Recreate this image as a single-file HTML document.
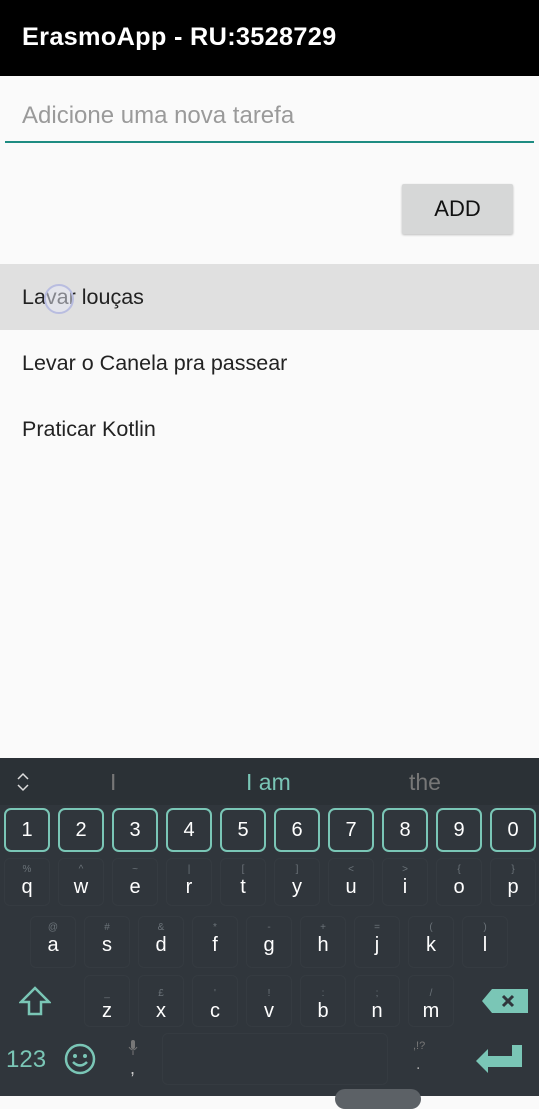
<!DOCTYPE html>
<html><head><style>
body{margin:0;width:539px;height:1096px;position:relative;overflow:hidden;background:#fafafa;font-family:"Liberation Sans",sans-serif}
.a{position:absolute}
.k{position:absolute;width:46px;border:1.5px solid #353b41;border-radius:6px;box-sizing:border-box;color:#fff;text-align:center}
.k b{display:block;font-weight:normal;font-size:10px;color:#6b7379;margin-top:5px;height:12px;line-height:12px}
.k span{display:block;font-size:20px;line-height:22px}
.n{position:absolute;top:808px;width:46px;height:44px;border:2px solid #7ac6b6;border-radius:7px;box-sizing:border-box;color:#fff;font-size:20px;line-height:40px;text-align:center}
.li{position:absolute;left:22px;font-size:21.5px;color:#222}
</style></head><body>
<div class="a" style="left:0;top:0;width:539px;height:76px;background:#000"></div>
<div class="a" style="left:22px;top:23px;color:#fff;font-size:25.3px;font-weight:bold;letter-spacing:0.3px">ErasmoApp - RU:3528729</div>
<div class="a" style="left:22px;top:102px;color:#9a9a9a;font-size:24px">Adicione uma nova tarefa</div>
<div class="a" style="left:5px;top:141px;width:529px;height:2px;background:#1e8c82"></div>
<div class="a" style="left:402px;top:184px;width:111px;height:50px;background:#d6d7d7;border-radius:2px;box-shadow:0 1px 2px rgba(0,0,0,.25);font-size:22px;line-height:50px;text-align:center;color:#111">ADD</div>
<div class="a" style="left:0;top:264px;width:539px;height:66px;background:#e0e0e0"></div>
<div class="li" style="top:285px">Lavar louças</div>
<div class="a" style="left:44px;top:284px;width:26px;height:26px;border:2px solid #b9bde0;border-radius:50%;background:rgba(230,232,245,.5)"></div>
<div class="li" style="top:351px">Levar o Canela pra passear</div>
<div class="li" style="top:417px">Praticar Kotlin</div>

<div class="a" style="left:0;top:758px;width:539px;height:338px;background:#30363c"></div>
<div class="a" style="left:0;top:758px;width:539px;height:47px;background:#2b3136"></div>
<svg class="a" style="left:16px;top:772px" width="14" height="20"><path d="M2 7 L7 2 L12 7 M2 13 L7 18 L12 13" stroke="#ddd" stroke-width="1.5" fill="none"/></svg>
<div class="a" style="left:110px;top:769px;font-size:23px;color:#777">I</div>
<div class="a" style="left:246px;top:769px;font-size:23px;color:#7ac6b6">I am</div>
<div class="a" style="left:409px;top:769px;font-size:23px;color:#777">the</div>

<div class="n" style="left:4px">1</div><div class="n" style="left:58px">2</div><div class="n" style="left:112px">3</div><div class="n" style="left:166px">4</div><div class="n" style="left:220px">5</div><div class="n" style="left:274px">6</div><div class="n" style="left:328px">7</div><div class="n" style="left:382px">8</div><div class="n" style="left:436px">9</div><div class="n" style="left:490px">0</div>

<div style="position:absolute;top:858px;left:0;width:539px">
<div class="k" style="left:4px;height:48px"><b>%</b><span>q</span></div>
<div class="k" style="left:58px;height:48px"><b>^</b><span>w</span></div>
<div class="k" style="left:112px;height:48px"><b>~</b><span>e</span></div>
<div class="k" style="left:166px;height:48px"><b>|</b><span>r</span></div>
<div class="k" style="left:220px;height:48px"><b>[</b><span>t</span></div>
<div class="k" style="left:274px;height:48px"><b>]</b><span>y</span></div>
<div class="k" style="left:328px;height:48px"><b>&lt;</b><span>u</span></div>
<div class="k" style="left:382px;height:48px"><b>&gt;</b><span>i</span></div>
<div class="k" style="left:436px;height:48px"><b>{</b><span>o</span></div>
<div class="k" style="left:490px;height:48px"><b>}</b><span>p</span></div>
</div>
<div style="position:absolute;top:916px;left:0;width:539px">
<div class="k" style="left:30px;height:52px"><b>@</b><span>a</span></div>
<div class="k" style="left:84px;height:52px"><b>#</b><span>s</span></div>
<div class="k" style="left:138px;height:52px"><b>&amp;</b><span>d</span></div>
<div class="k" style="left:192px;height:52px"><b>*</b><span>f</span></div>
<div class="k" style="left:246px;height:52px"><b>-</b><span>g</span></div>
<div class="k" style="left:300px;height:52px"><b>+</b><span>h</span></div>
<div class="k" style="left:354px;height:52px"><b>=</b><span>j</span></div>
<div class="k" style="left:408px;height:52px"><b>(</b><span>k</span></div>
<div class="k" style="left:462px;height:52px"><b>)</b><span>l</span></div>
</div>
<div style="position:absolute;top:975px;left:0;width:539px">
<div class="k" style="left:84px;height:52px"><b style="margin-top:12px">_</b><span>z</span></div>
<div class="k" style="left:138px;height:52px"><b style="margin-top:12px">£</b><span>x</span></div>
<div class="k" style="left:192px;height:52px"><b style="margin-top:12px">'</b><span>c</span></div>
<div class="k" style="left:246px;height:52px"><b style="margin-top:12px">!</b><span>v</span></div>
<div class="k" style="left:300px;height:52px"><b style="margin-top:12px">:</b><span>b</span></div>
<div class="k" style="left:354px;height:52px"><b style="margin-top:12px">;</b><span>n</span></div>
<div class="k" style="left:408px;height:52px"><b style="margin-top:12px">/</b><span>m</span></div>
</div>
<svg class="a" style="left:19px;top:986px" width="32" height="30"><path d="M16 2 L30 16 L22 16 L22 28 L10 28 L10 16 L2 16 Z" stroke="#7ac6b6" stroke-width="2.5" fill="none"/></svg>
<svg class="a" style="left:482px;top:989px" width="46" height="24"><path d="M10 0 L46 0 L46 24 L10 24 L0 12 Z" fill="#7ac6b6"/><path d="M21 7 L31 17 M31 7 L21 17" stroke="#30363c" stroke-width="3"/></svg>
<div class="a" style="left:6px;top:1046px;font-size:24px;color:#7ac6b6">123</div>
<svg class="a" style="left:64px;top:1043px" width="32" height="32"><circle cx="16" cy="16" r="14" stroke="#7ac6b6" stroke-width="2.5" fill="none"/><circle cx="11" cy="13" r="2" fill="#7ac6b6"/><circle cx="21" cy="13" r="2" fill="#7ac6b6"/><path d="M9 19 Q16 26 23 19" stroke="#7ac6b6" stroke-width="2.5" fill="none"/></svg>
<svg class="a" style="left:128px;top:1040px" width="10" height="16"><rect x="3" y="0" width="4" height="9" rx="2" fill="#777"/><path d="M1 7 Q5 13 9 7 M5 11 V15" stroke="#777" fill="none"/></svg>
<div class="a" style="left:130px;top:1058px;color:#ccc;font-size:18px">,</div>
<div class="a" style="left:162px;top:1033px;width:226px;height:52px;border:1.5px solid #353b41;border-radius:6px;box-sizing:border-box"></div>
<div class="a" style="left:413px;top:1040px;color:#777;font-size:11px">,!?</div>
<div class="a" style="left:416px;top:1056px;color:#aaa;font-size:16px">.</div>
<svg class="a" style="left:476px;top:1045px" width="48" height="30"><path d="M0 16 L12 4 L12 11 L36 11 L36 0 L46 0 L46 22 L12 22 L12 28 Z" fill="#7ac6b6"/></svg>
<div class="a" style="left:335px;top:1089px;width:86px;height:20px;border-radius:10px;background:#5c6166"></div>
</body></html>
